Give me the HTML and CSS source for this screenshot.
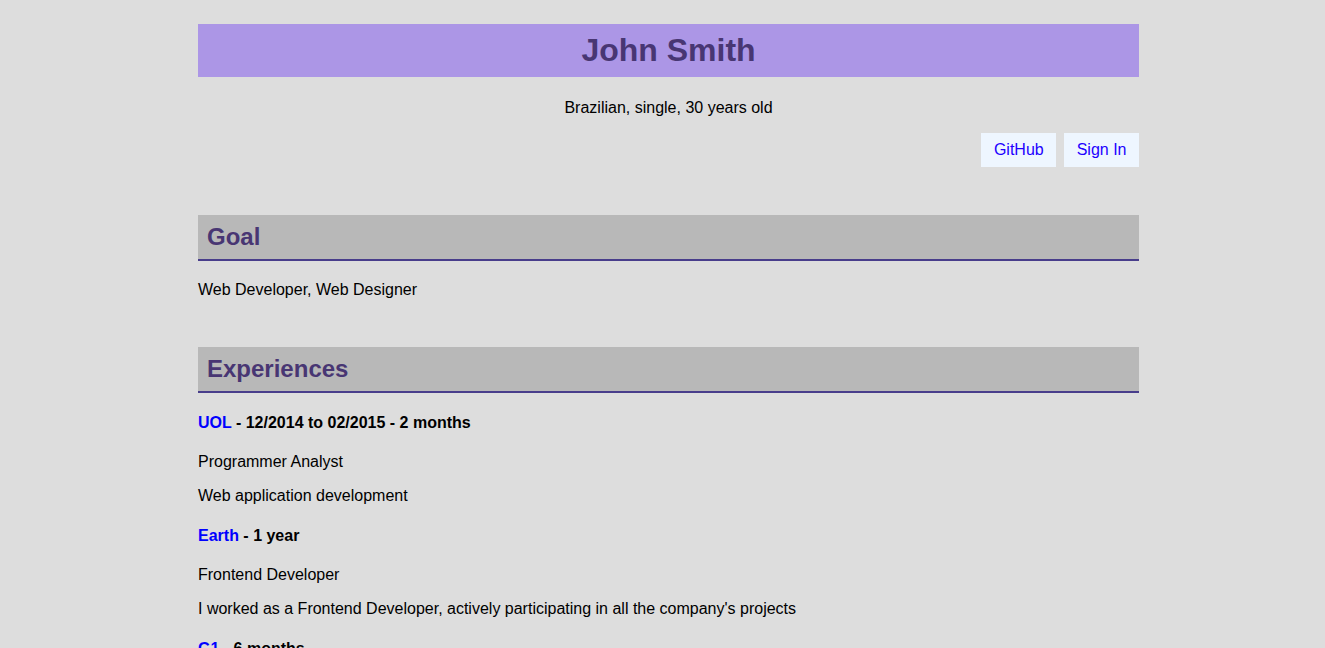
FILE: index.html
```html
<!DOCTYPE html>
<html lang="en">
<head>
<meta charset="utf-8">
<title>John Smith</title>
<link rel="stylesheet" href="styles.css">
</head>
<body>
<div class="page">
  <header class="top">
    <h1 class="banner">John Smith</h1>
    <p class="info">Brazilian, single, 30 years old</p>
    <nav class="links">
      <a class="btn" href="#">GitHub</a>
      <a class="btn" href="#">Sign In</a>
    </nav>
  </header>

  <section class="goal">
    <h2 class="section-title">Goal</h2>
    <p class="goal-text">Web Developer, Web Designer</p>
  </section>

  <section class="experiences">
    <h2 class="section-title">Experiences</h2>
    <div class="job">
      <h4 class="job-title"><a href="#">UOL</a> - 12/2014 to 02/2015 - 2 months</h4>
      <p class="job-text">Programmer Analyst</p>
      <p class="job-text">Web application development</p>
    </div>
    <div class="job">
      <h4 class="job-title"><a href="#">Earth</a> - 1 year</h4>
      <p class="job-text">Frontend Developer</p>
      <p class="job-text">I worked as a Frontend Developer, actively participating in all the company's projects</p>
    </div>
    <div class="job">
      <h4 class="job-title"><a href="#">G1</a> - 6 months</h4>
      <p class="job-text">Web Designer</p>
      <p class="job-text">Layout and interface design</p>
    </div>
  </section>
</div>
</body>
</html>
```

FILE: styles.css
```css
html, body {
  margin: 0;
  padding: 0;
}

body {
  background: #dddddd;
  font-family: "Liberation Sans", Arial, sans-serif;
  font-size: 16px;
  line-height: 18px;
  color: #000;
}

.page {
  width: 941px;
  margin-left: 198px;
  padding-top: 24px;
}

.banner {
  margin: 0;
  background: #ac96e6;
  color: #483673;
  font-size: 32px;
  font-weight: bold;
  height: 53px;
  line-height: 52px;
  text-align: center;
}

.info {
  margin: 22px 0 0;
  text-align: center;
}

.links {
  display: flex;
  justify-content: flex-end;
  gap: 8px;
  margin-top: 16px;
}

.btn {
  display: block;
  height: 34px;
  line-height: 34px;
  padding: 0 12.5px;
  background: #eef6ff;
  color: #2200ff;
  text-decoration: none;
}

.goal {
  margin-top: 48px;
}

.section-title {
  margin: 0;
  height: 44px;
  line-height: 44px;
  padding: 0 9px;
  background: #b8b8b8;
  border-bottom: 2px solid #483d8b;
  color: #483673;
  font-size: 24px;
  font-weight: bold;
}

.goal-text {
  margin: 20px 0 0;
}

.experiences {
  margin-top: 48px;
}

.job-title {
  margin: 21px 0;
  font-size: 16px;
  font-weight: bold;
}

.job + .job .job-title {
  margin-top: 22px;
}

.job-title a {
  color: #0000ff;
  text-decoration: none;
}

.job-text {
  margin: 16px 0;
}
```
